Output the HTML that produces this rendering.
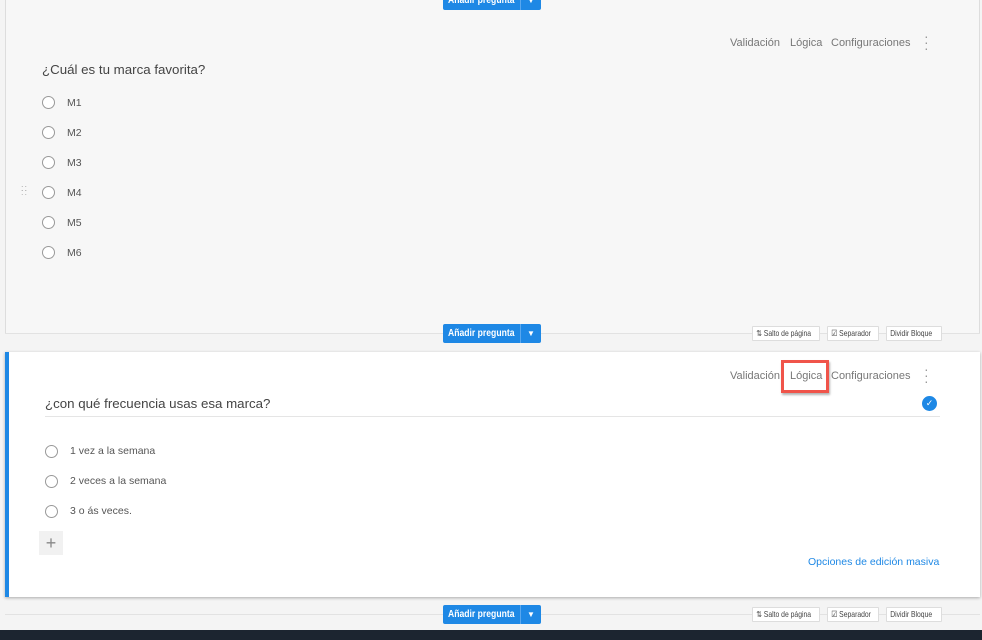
<!DOCTYPE html>
<html><head><meta charset="utf-8"><style>
*{box-sizing:border-box;margin:0;padding:0}
body{width:982px;height:640px;overflow:hidden;background:#f4f4f4;font-family:"Liberation Sans",sans-serif;position:relative;color:#555}
.abs{position:absolute}
.card1{left:5px;top:0;width:975px;height:334px;background:#f7f7f7;border-left:1px solid #ddd;border-right:1px solid #ddd}
.links{font-size:11px;color:#777}
.q{font-size:13.3px;color:#444}
.opt{font-size:10.5px;color:#555}
.radio{width:13px;height:13px;border:1.3px solid #999;border-radius:50%;background:#fff}
.btn{background:#1e88e5;color:#fff;font-size:10.5px;font-weight:bold;height:19px;line-height:19px;border-radius:2px;width:98px}
.btn .t{position:absolute;left:5px;top:0;display:inline-block;transform:scaleX(.82);transform-origin:left;white-space:nowrap}
.btn .d{position:absolute;left:77px;top:0;width:1px;height:19px;background:#5aa7ee}
.btn .a{position:absolute;left:84px;top:0;font-size:8px}
.sm{background:#fff;border:1px solid #ddd;font-size:8.5px;color:#444;height:15px;line-height:13px;border-radius:1px;overflow:hidden;white-space:nowrap}
.sm span{display:inline-block;transform:scaleX(.8);transform-origin:left;padding-left:4px}
.card2{left:5px;top:352px;width:975px;height:245px;background:#fff;border-left:4px solid #1e88e5;box-shadow:0 1px 3px rgba(0,0,0,.3)}
</style></head><body>
<div class="abs card1"></div>
<div class="abs btn" style="left:443px;top:-9px"><span class="t">Añadir pregunta</span><span class="d"></span><span class="a">▼</span></div>
<div class="abs links" style="left:730px;top:37px">Validación</div>
<div class="abs links" style="left:790px;top:37px">Lógica</div>
<div class="abs links" style="left:831px;top:37px">Configuraciones</div>
<div class="abs" style="left:924px;top:33px;color:#999;font-size:14px;line-height:6px">·<br>·<br>·</div>
<div class="abs q" style="left:42px;top:62px">¿Cuál es tu marca favorita?</div>
<div class="abs radio" style="left:42px;top:96px"></div><div class="abs opt" style="left:67px;top:97px">M1</div>
<div class="abs radio" style="left:42px;top:126px"></div><div class="abs opt" style="left:67px;top:127px">M2</div>
<div class="abs radio" style="left:42px;top:156px"></div><div class="abs opt" style="left:67px;top:157px">M3</div>
<div class="abs radio" style="left:42px;top:186px"></div><div class="abs opt" style="left:67px;top:187px">M4</div>
<div class="abs" style="left:21px;top:186px;color:#aaa;font-size:9px;line-height:4px;letter-spacing:1px">::<br>::</div>
<div class="abs radio" style="left:42px;top:216px"></div><div class="abs opt" style="left:67px;top:217px">M5</div>
<div class="abs radio" style="left:42px;top:246px"></div><div class="abs opt" style="left:67px;top:247px">M6</div>
<div class="abs" style="left:5px;top:333px;width:975px;height:1px;background:#e2e2e2"></div>
<div class="abs btn" style="left:443px;top:324px"><span class="t">Añadir pregunta</span><span class="d"></span><span class="a">▼</span></div>
<div class="abs sm" style="left:752px;top:326px;width:68px"><span>⇅ Salto de página</span></div>
<div class="abs sm" style="left:827px;top:326px;width:52px"><span>☑ Separador</span></div>
<div class="abs sm" style="left:886px;top:326px;width:56px"><span>Dividir Bloque</span></div>
<div class="abs card2"></div>
<div class="abs links" style="left:730px;top:370px">Validación</div>
<div class="abs" style="left:781px;top:360px;width:48px;height:33px;border:3px solid #f0544a;box-shadow:1px 2px 2px rgba(0,0,0,.3)"></div>
<div class="abs links" style="left:790px;top:370px">Lógica</div>
<div class="abs links" style="left:831px;top:370px">Configuraciones</div>
<div class="abs" style="left:924px;top:366px;color:#999;font-size:14px;line-height:6px">·<br>·<br>·</div>
<div class="abs q" style="left:45px;top:396px">¿con qué frecuencia usas esa marca?</div>
<div class="abs" style="left:922px;top:396px;width:15px;height:15px;border-radius:50%;background:#1e88e5;color:#fff;font-size:9px;text-align:center;line-height:15px">✓</div>
<div class="abs" style="left:45px;top:416px;width:895px;height:1px;background:#e5e5e5"></div>
<div class="abs radio" style="left:45px;top:445px"></div><div class="abs opt" style="left:70px;top:445px">1 vez a la semana</div>
<div class="abs radio" style="left:45px;top:475px"></div><div class="abs opt" style="left:70px;top:475px">2 veces a la semana</div>
<div class="abs radio" style="left:45px;top:505px"></div><div class="abs opt" style="left:70px;top:505px">3 o ás veces.</div>
<div class="abs" style="left:39px;top:531px;width:24px;height:24px;background:#f1f1f1;color:#888;font-size:18px;text-align:center;line-height:24px">+</div>
<div class="abs" style="left:808px;top:556px;font-size:10.5px;color:#1e88e5">Opciones de edición masiva</div>
<div class="abs" style="left:5px;top:614px;width:975px;height:1px;background:#e2e2e2"></div>
<div class="abs btn" style="left:443px;top:605px"><span class="t">Añadir pregunta</span><span class="d"></span><span class="a">▼</span></div>
<div class="abs sm" style="left:752px;top:607px;width:68px"><span>⇅ Salto de página</span></div>
<div class="abs sm" style="left:827px;top:607px;width:52px"><span>☑ Separador</span></div>
<div class="abs sm" style="left:886px;top:607px;width:56px"><span>Dividir Bloque</span></div>
<div class="abs" style="left:0;top:630px;width:982px;height:10px;background:#1c2530"></div>
</body></html>
